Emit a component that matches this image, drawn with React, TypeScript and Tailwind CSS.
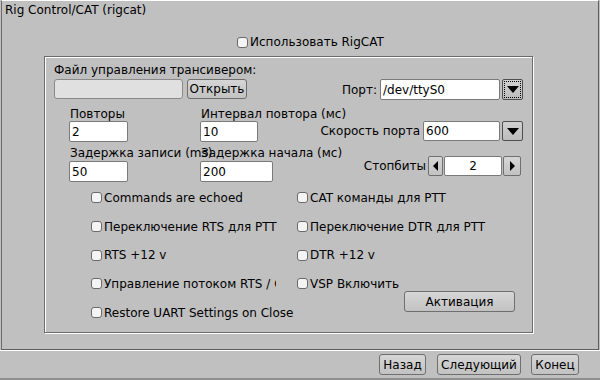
import React from "react";

function Check({ label, clip }: { label: string; clip?: boolean }) {
  return (
    <div className={"flex items-center h-full " + (clip ? "w-[185px] overflow-hidden" : "")}>
      <span className="w-[11px] h-[11px] shrink-0 rounded-[3px] border border-[#6a6a6a] bg-[#f4f4f4]" />
      <span className="ml-[2px] whitespace-nowrap">{label}</span>
    </div>
  );
}

function Btn({ label, w, h = 21 }: { label: string; w: string; h?: number }) {
  return (
    <div
      className={
        w +
        " " +
        (h === 20 ? "h-[20px]" : "h-[21px]") +
        " flex items-center justify-center rounded-[3px] border border-[#6f6f6f] bg-gradient-to-b from-[#d6d6d6] to-[#c2c2c2] whitespace-nowrap"
      }
    >
      {label}
    </div>
  );
}

function Down() {
  return (
    <svg width="12" height="7" viewBox="0 0 12 7">
      <polygon points="0,0 12,0 6,7" fill="#000" />
    </svg>
  );
}

function Combo({ value, w, focus, h }: { value: string; w: string; focus?: boolean; h: string }) {
  return (
    <div className={"flex shrink-0 " + h}>
      <div className={w + " h-full bg-white border border-[#7a7a7a] rounded-[2px] flex items-center pl-[2px]"}>{value}</div>
      <div className="ml-[2px] w-[21px] h-full border border-[#4f4f4f] rounded-[2px] bg-gradient-to-b from-[#d0d0d0] to-[#bdbdbd] p-[1px]">
        <div className={"w-full h-full flex items-center justify-center " + (focus ? "border border-dotted border-black" : "")}>
          <Down />
        </div>
      </div>
    </div>
  );
}

function Input({ value, w }: { value: string; w: string }) {
  return (
    <div className={w + " h-[21px] bg-white border border-[#7a7a7a] rounded-[2px] flex items-center pl-[2px]"}>{value}</div>
  );
}

export default function App() {
  return (
    <div className="w-[600px] h-[380px] bg-[#c0c0c0] text-[12px] leading-[14px] text-black font-['DejaVu_Sans',sans-serif] overflow-hidden">
      <div className="h-[350px] px-[1px]">
        <div className="h-full border-t border-t-white border-l border-r border-b border-l-[#6b6b6b] border-r-[#5e5e5e] border-b-[#5e5e5e]">
          <div className="pl-[3px] pt-[2px]">Rig Control/CAT (rigcat)</div>
          <div className="ml-[235px] mt-[18px] h-[14px]">
            <Check label="Использовать RigCAT" />
          </div>
          <div className="ml-[42px] mt-[7px] w-[489px] h-[277px] border border-[#6b6b6b] shadow-[inset_1px_1px_0_#fff,1px_1px_0_#fff]">
            {/* Row 1 */}
            <div className="flex items-end pt-[6px] pl-[9px] pr-[9px]">
              <div className="flex flex-col shrink-0">
                <div className="h-[16px]">Файл управления трансивером:</div>
                <div className="flex gap-[4px]">
                  <div className="w-[129px] h-[20px] bg-[#e0e0e0] border border-[#8a8a8a] rounded-[3px]" />
                  <Btn label="Открыть" w="w-[60px]" h={20} />
                </div>
              </div>
              <div className="ml-auto flex items-center gap-[3px] mb-[-1px] shrink-0">
                <span>Порт:</span>
                <Combo value="/dev/ttyS0" w="w-[120px]" h="h-[21px]" focus />
              </div>
            </div>
            {/* Row 2 */}
            <div className="flex mt-[8px] pl-[24px] pr-[9px]">
              <div className="w-[131px] shrink-0 flex flex-col">
                <div className="h-[14px] pl-[1px] whitespace-nowrap">Повторы</div>
                <Input value="2" w="w-[59px]" />
              </div>
              <div className="w-[100px] shrink-0 flex flex-col">
                <div className="h-[14px] pl-[1px] whitespace-nowrap">Интервал повтора (мс)</div>
                <Input value="10" w="w-[58px]" />
              </div>
              <div className="ml-auto self-end mb-[1px] flex items-center gap-[3px] shrink-0">
                <span className="whitespace-nowrap">Скорость порта</span>
                <Combo value="600" w="w-[77px]" h="h-[20px]" />
              </div>
            </div>
            {/* Row 3 */}
            <div className="flex mt-[4px] pl-[24px] pr-[11px]">
              <div className="w-[131px] shrink-0 flex flex-col">
                <div className="h-[15px] pl-[1px] whitespace-nowrap">Задержка записи (ms)</div>
                <Input value="50" w="w-[59px]" />
              </div>
              <div className="w-[100px] shrink-0 flex flex-col">
                <div className="h-[15px] pl-[1px] whitespace-nowrap">Задержка начала (мс)</div>
                <Input value="200" w="w-[73px]" />
              </div>
              <div className="ml-auto self-start mt-[10px] flex items-center gap-[2px] shrink-0">
                <span>Стопбиты</span>
                <div className="flex h-[20px] gap-[1px]">
                  <div className="w-[15px] h-full border border-[#6f6f6f] rounded-[2px] bg-gradient-to-b from-[#d6d6d6] to-[#c2c2c2] flex items-center justify-center">
                    <svg width="5" height="10" viewBox="0 0 5 10"><polygon points="5,0 5,10 0,5" fill="#000" /></svg>
                  </div>
                  <div className="w-[58px] h-full bg-white border border-[#7a7a7a] rounded-[2px] flex items-center justify-center">2</div>
                  <div className="w-[18px] h-full border border-[#6f6f6f] rounded-[2px] bg-gradient-to-b from-[#d6d6d6] to-[#c2c2c2] flex items-center justify-center">
                    <svg width="5" height="10" viewBox="0 0 5 10"><polygon points="0,0 0,10 5,5" fill="#000" /></svg>
                  </div>
                </div>
              </div>
            </div>
            {/* Checkboxes */}
            <div className="mt-[1px] pl-[46px] grid grid-cols-[206px_1fr] grid-rows-[29px_29px_28px_29px_29px]">
              <Check label="Commands are echoed" />
              <Check label="CAT команды для PTT" />
              <Check label="Переключение RTS для PTT" />
              <Check label="Переключение DTR для PTT" />
              <Check label="RTS +12 v" />
              <Check label="DTR +12 v" />
              <Check label="Управление потоком RTS / CTS" clip />
              <Check label="VSP Включить" />
              <Check label="Restore UART Settings on Close" />
              <div className="flex items-start pl-[107px]">
                <div className="-mt-[7px]">
                  <Btn label="Активация" w="w-[111px]" />
                </div>
              </div>
            </div>
          </div>
        </div>
      </div>
      <div className="h-[30px] border-t border-t-white border-b-2 border-b-[#8e8e8e] flex justify-end items-start pt-[3px] pr-[21px]">
        <Btn label="Назад" w="w-[47px]" />
        <div className="ml-[11px]"><Btn label="Следующий" w="w-[84px]" /></div>
        <div className="ml-[10px]"><Btn label="Конец" w="w-[48px]" /></div>
      </div>
    </div>
  );
}
